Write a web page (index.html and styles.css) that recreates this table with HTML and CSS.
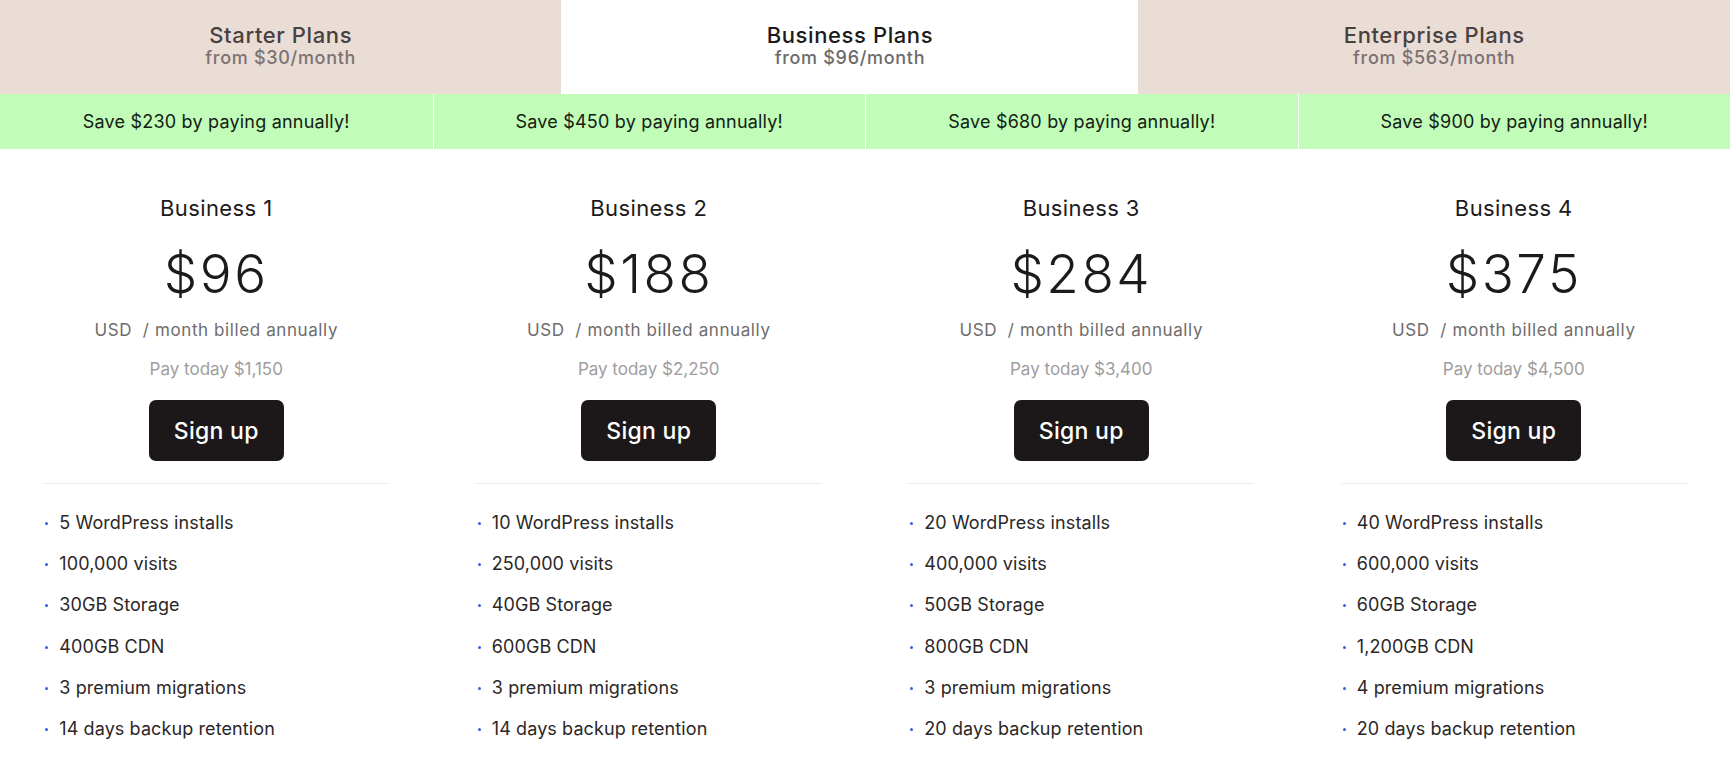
FILE: index.html
```html
<!DOCTYPE html>
<html lang="en">
<head>
<meta charset="utf-8">
<title>Business Plans</title>
<link rel="stylesheet" href="styles.css">
</head>
<body>
<div class="pricing">
  <nav class="tabs">
    <div class="tab">
      <div class="tab-title">Starter Plans</div>
      <div class="tab-sub">from $30/month</div>
    </div>
    <div class="tab tab-active">
      <div class="tab-title">Business Plans</div>
      <div class="tab-sub">from $96/month</div>
    </div>
    <div class="tab">
      <div class="tab-title">Enterprise Plans</div>
      <div class="tab-sub">from $563/month</div>
    </div>
  </nav>

  <div class="plans">
    <section class="plan">
      <div class="save">Save $230 by paying annually!</div>
      <div class="plan-body">
        <h2 class="plan-name">Business 1</h2>
        <div class="price">$96</div>
        <div class="period">USD&nbsp; / month billed annually</div>
        <div class="today">Pay today $1,150</div>
        <button class="signup">Sign up</button>
        <hr class="rule">
        <ul class="features">
          <li>5 WordPress installs</li>
          <li>100,000 visits</li>
          <li>30GB Storage</li>
          <li>400GB CDN</li>
          <li>3 premium migrations</li>
          <li>14 days backup retention</li>
        </ul>
      </div>
    </section>
    <section class="plan">
      <div class="save">Save $450 by paying annually!</div>
      <div class="plan-body">
        <h2 class="plan-name">Business 2</h2>
        <div class="price">$188</div>
        <div class="period">USD&nbsp; / month billed annually</div>
        <div class="today">Pay today $2,250</div>
        <button class="signup">Sign up</button>
        <hr class="rule">
        <ul class="features">
          <li>10 WordPress installs</li>
          <li>250,000 visits</li>
          <li>40GB Storage</li>
          <li>600GB CDN</li>
          <li>3 premium migrations</li>
          <li>14 days backup retention</li>
        </ul>
      </div>
    </section>
    <section class="plan">
      <div class="save">Save $680 by paying annually!</div>
      <div class="plan-body">
        <h2 class="plan-name">Business 3</h2>
        <div class="price">$284</div>
        <div class="period">USD&nbsp; / month billed annually</div>
        <div class="today">Pay today $3,400</div>
        <button class="signup">Sign up</button>
        <hr class="rule">
        <ul class="features">
          <li>20 WordPress installs</li>
          <li>400,000 visits</li>
          <li>50GB Storage</li>
          <li>800GB CDN</li>
          <li>3 premium migrations</li>
          <li>20 days backup retention</li>
        </ul>
      </div>
    </section>
    <section class="plan">
      <div class="save">Save $900 by paying annually!</div>
      <div class="plan-body">
        <h2 class="plan-name">Business 4</h2>
        <div class="price">$375</div>
        <div class="period">USD&nbsp; / month billed annually</div>
        <div class="today">Pay today $4,500</div>
        <button class="signup">Sign up</button>
        <hr class="rule">
        <ul class="features">
          <li>40 WordPress installs</li>
          <li>600,000 visits</li>
          <li>60GB Storage</li>
          <li>1,200GB CDN</li>
          <li>4 premium migrations</li>
          <li>20 days backup retention</li>
        </ul>
      </div>
    </section>
  </div>
</div>
</body>
</html>
```

FILE: styles.css
```css
* { box-sizing: border-box; }

html, body {
  margin: 0;
  padding: 0;
  background: #ffffff;
}

body {
  font-family: Inter, "Noto Sans", "Liberation Sans", sans-serif;
  color: #1e1e1e;
}

.pricing {
  width: 1730px;
  height: 784px;
  overflow: hidden;
}

.tabs {
  display: flex;
  height: 94px;
}

.tab {
  flex: 1 1 auto;
  display: flex;
  flex-direction: column;
  align-items: center;
  justify-content: center;
  background: #e9ddd6;
  padding-bottom: 4px;
}

.tab-active {
  background: #ffffff;
}

.tab-title {
  font-size: 22px;
  font-weight: 500;
  line-height: 24px;
  color: #4a4040;
  letter-spacing: 0.6px;
}

.tab-sub {
  font-size: 18px;
  font-weight: 500;
  line-height: 21px;
  color: #7b7272;
  letter-spacing: 0.7px;
}

.tab-active .tab-title { color: #1d1a1b; }
.tab-active .tab-sub { color: #6c6a6a; }

.plans {
  display: grid;
  grid-template-columns: repeat(4, 1fr);
}

.plan + .plan .save {
  border-left: 1px solid #ffffff;
}

.save {
  height: 55px;
  background: #c1fcb8;
  display: flex;
  align-items: center;
  justify-content: center;
  font-size: 18px;
  letter-spacing: 0.2px;
  color: #132013;
  padding-bottom: 1px;
}

.plan-body {
  display: flex;
  flex-direction: column;
  align-items: center;
  padding-top: 46px;
}

.plan-name {
  margin: 0;
  font-size: 22px;
  font-weight: 400;
  line-height: 26px;
  color: #1d1a1b;
  letter-spacing: 0.4px;
}

.price {
  margin-top: 27px;
  font-size: 53px;
  font-weight: 300;
  line-height: 52px;
  color: #1d1a1b;
  letter-spacing: 2.5px;
}

.period {
  margin-top: 20px;
  font-size: 17px;
  line-height: 20px;
  color: #6e6c6c;
  letter-spacing: 0.6px;
}

.today {
  margin-top: 20px;
  font-size: 17px;
  line-height: 19px;
  color: #a09d9d;
}

.signup {
  margin-top: 21px;
  height: 61px;
  padding: 0 25px;
  border: none;
  border-radius: 7px;
  background: #1c1819;
  color: #ffffff;
  font-family: inherit;
  font-size: 23px;
  font-weight: 500;
  letter-spacing: 0.3px;
  cursor: pointer;
}

.rule {
  width: 80%;
  margin: 22px 0 0;
  border: none;
  border-top: 1px solid #ececec;
}

.features {
  list-style: none;
  width: 80%;
  margin: 18px 0 0;
  padding: 0;
}

.features li {
  position: relative;
  padding-left: 16px;
  font-size: 18px;
  line-height: 41.2px;
  color: #2b2727;
  letter-spacing: 0.1px;
}

.features li::before {
  content: "";
  position: absolute;
  left: 2px;
  top: 20px;
  width: 3px;
  height: 3px;
  border-radius: 50%;
  background: #3a5fe0;
}
```
